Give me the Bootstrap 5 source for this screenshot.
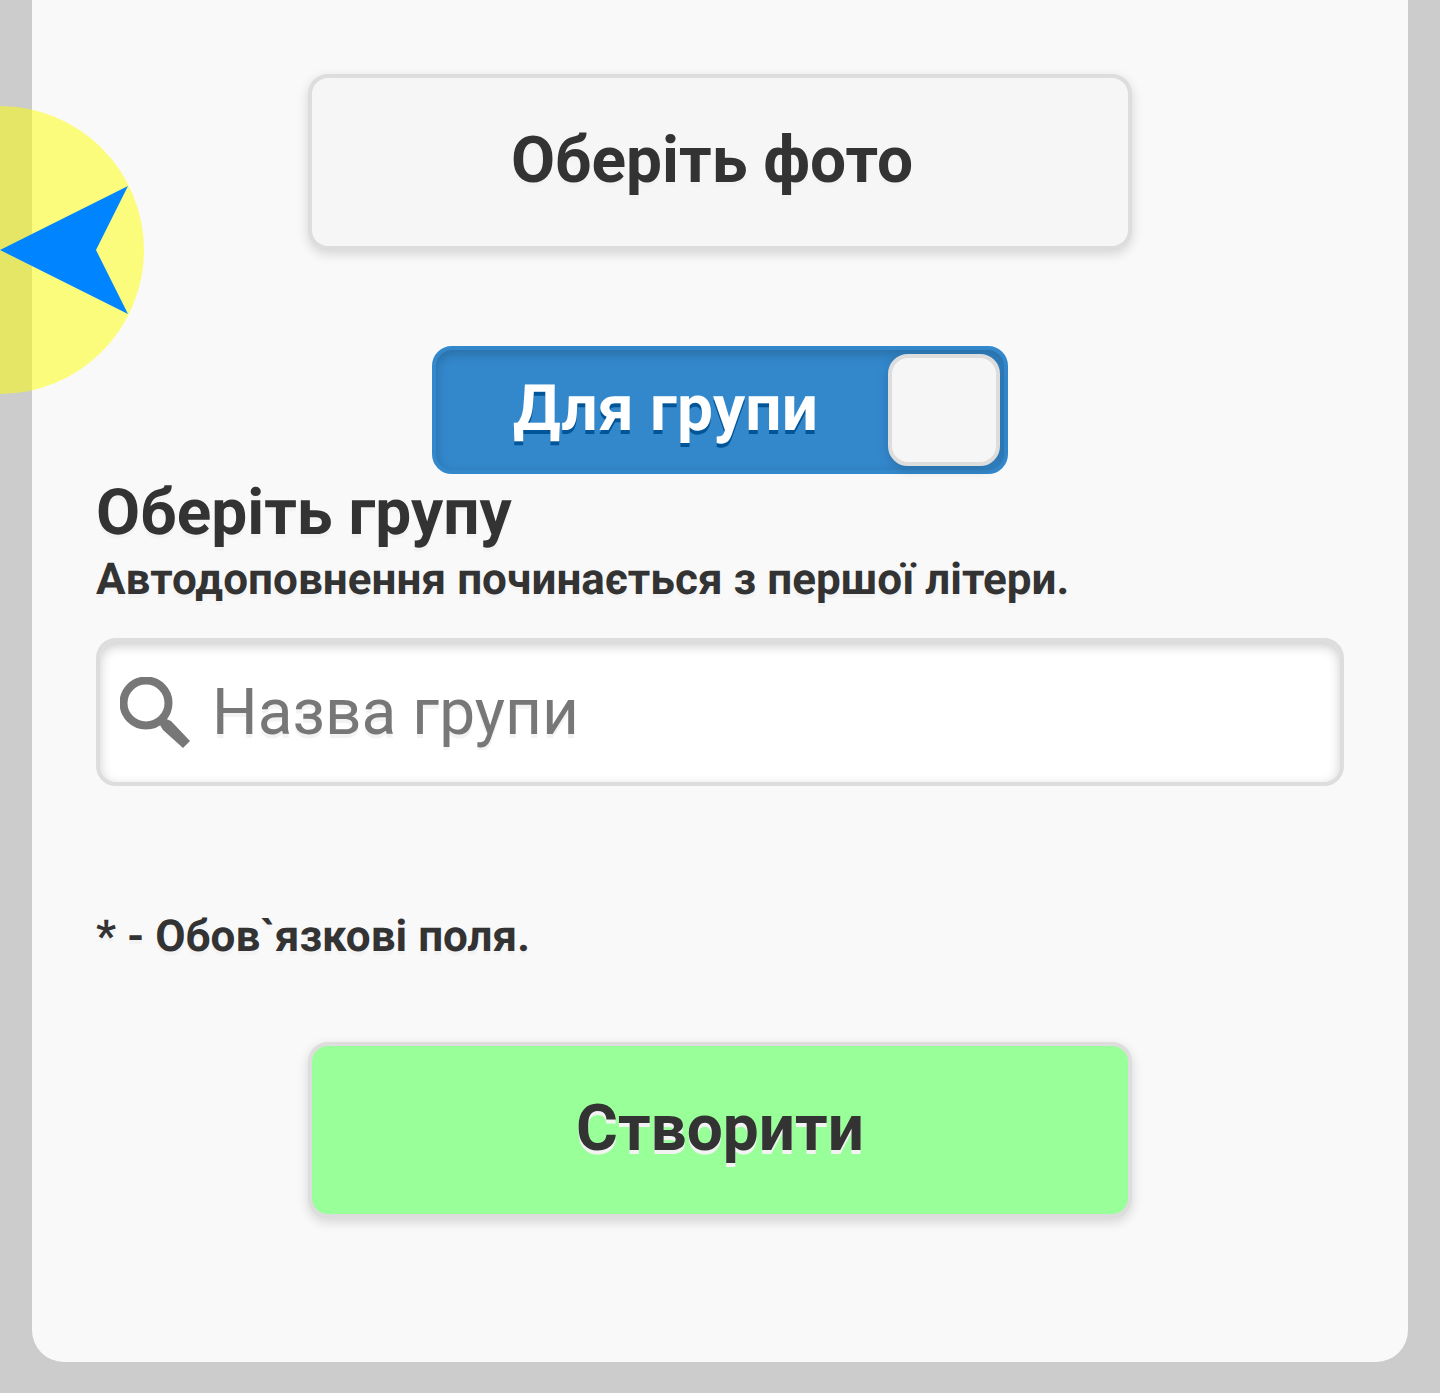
<!DOCTYPE html>
<html lang="uk">

<head>
    <meta charset="UTF-8">
    <meta name="viewport" content="width=device-width, initial-scale=1.0">
    <title>Створити</title>
    <link rel="stylesheet" href="https://cdn.jsdelivr.net/npm/bootstrap@5.3.0/dist/css/bootstrap.min.css">
    <style>
        html { background: #fff; height: 100%; }
        body { background: #ccc; height: 1393px; overflow: hidden; position: relative; font-family: Roboto, "Liberation Sans", sans-serif; color: #333; text-shadow: 0 4px 0 #f3f3f3; text-rendering: geometricPrecision; }
        .sheet { margin: 0 32px; height: 1362px; background: #f9f9f9; border-radius: 0 0 32px 32px; padding: 74px 64px 0; }
        .pick-btn { display: block; width: 824px; height: 176px; margin: 0 auto; padding: 0 16px 2px 0; background: #f6f6f6; border: 4px solid #ddd; border-radius: 20px; box-shadow: 0 4px 12px rgba(0, 0, 0, .15); color: #333; font-size: 64px; font-weight: 700; line-height: 1.2; text-shadow: 0 4px 0 #f3f3f3; }
        .pick-btn:hover { background: #f6f6f6; border-color: #ddd; color: #333; }
        .create-btn, .create-btn:hover { background: #9f9; padding: 0 0 2px; }
        .group-toggle { width: 576px; height: 128px; margin: 96px auto 0; background: #38c; border: 4px solid #38c; border-radius: 20px; box-shadow: inset 0 4px 12px rgba(0, 0, 0, .2); padding: 4px; }
        .toggle-text { color: #fff; font-size: 64px; font-weight: 700; letter-spacing: .2px; line-height: 1.2; text-shadow: 0 4px 0 #059; padding: 0 0 2px 73px; }
        .toggle-knob { width: 112px; height: 112px; background: #f6f6f6; border: 4px solid #ddd; border-radius: 20px; box-shadow: 0 4px 12px rgba(0, 0, 0, .15); }
        .group-title { font-size: 64px; font-weight: 700; line-height: 78px; margin: 0; color: #333; }
        .group-hint { font-size: 44px; font-weight: 700; letter-spacing: .05px; line-height: 54px; margin: 0; }
        .search-box { height: 148px; margin-top: 32px; background: #fff; border: 4px solid #ddd; border-radius: 20px; box-shadow: inset 0 4px 12px rgba(0, 0, 0, .2); padding-left: 20px; }
        .search-box svg { flex: none; }
        .search-input { border: 0; outline: 0; background: transparent; padding: 2px 0 0 22px; width: 100%; font-size: 64px; color: #333; font-family: inherit; }
        .search-input::placeholder { color: #777; opacity: 1; text-shadow: 0 4px 0 #f3f3f3; }
        .note { font-size: 44px; font-weight: 700; line-height: 50px; margin: 125px 0 81px; }
        .nav-dot { position: absolute; left: 0; top: 106px; }
    </style>
</head>

<body>
    <div class="sheet">
        <button type="button" class="btn pick-btn">Оберіть фото</button>

        <div class="group-toggle d-flex align-items-center justify-content-between">
            <span class="toggle-text">Для групи</span>
            <span class="toggle-knob"></span>
        </div>

        <h2 class="group-title">Оберіть групу</h2>
        <p class="group-hint">Автодоповнення починається з першої літери.</p>

        <div class="search-box d-flex align-items-center">
            <svg width="70" height="71" viewBox="0 0 70 71">
                <circle cx="26" cy="26" r="22.5" fill="none" stroke="#777" stroke-width="8"/>
                <path d="M41 44 L44 41 L51 44 L70 64 L63 71 L43 53 L40 48 Z" fill="#777"/>
            </svg>
            <input type="text" class="search-input" placeholder="Назва групи">
        </div>

        <p class="note">* - Обов`язкові поля.</p>

        <button type="button" class="btn pick-btn create-btn">Створити</button>
    </div>

    <!-- floating locator over the page edge -->
    <svg class="nav-dot" width="144" height="288" viewBox="0 0 144 288">
        <circle cx="0" cy="144" r="144" fill="#ff0" fill-opacity=".5"/>
        <polygon points="0,144 128,80 96,144 128,208" fill="#0084ff"/>
    </svg>

    <script src="https://cdn.jsdelivr.net/npm/bootstrap@5.3.0/dist/js/bootstrap.bundle.min.js"></script>
</body>

</html>
